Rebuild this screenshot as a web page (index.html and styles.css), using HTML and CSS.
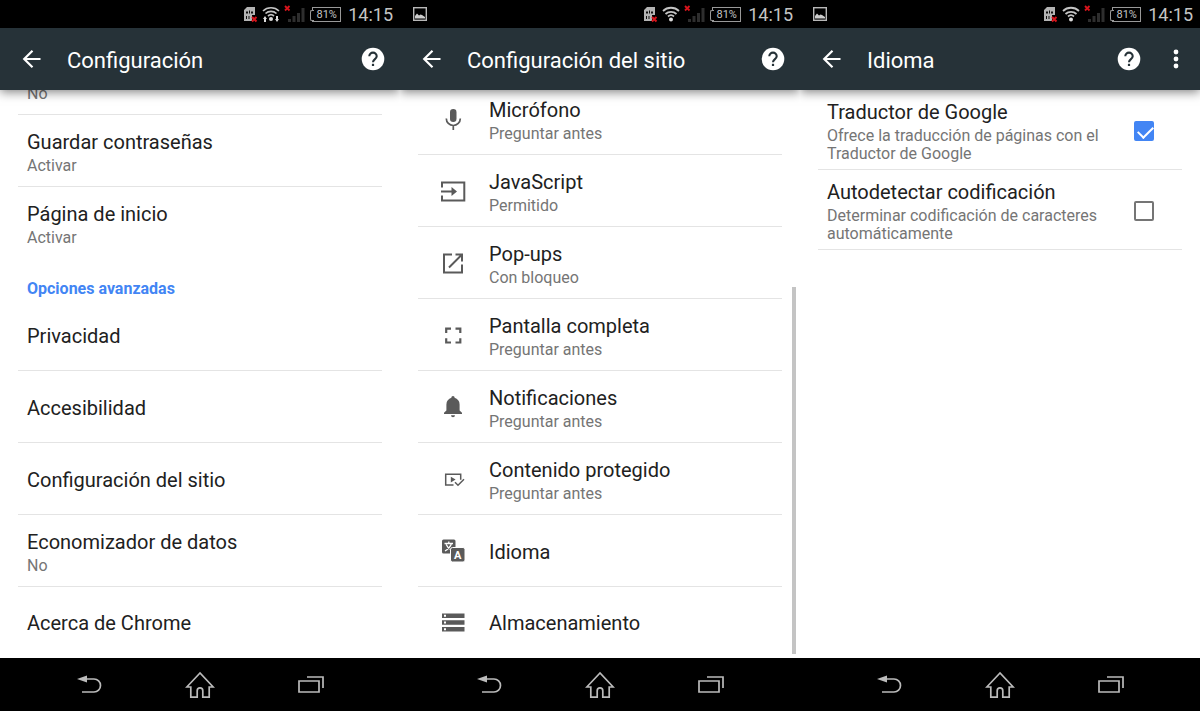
FILE: index.html
```html
<!DOCTYPE html>
<html lang="es">
<head>
    <meta charset="UTF-8">
    <meta name="viewport" content="width=device-width, initial-scale=1.0">
    <title>Configuración</title>
    <link rel="stylesheet" href="styles.css">
</head>
<body>
    <!-- shared icons -->
    <svg class="sprite" aria-hidden="true">
        <symbol id="sim" viewBox="0 0 15 17">
            <path d="M4 1h8v8H9v6H1V4z" fill="#b4b4b4"/>
            <path d="M3 5.500h2v2H3zM6 4.500h1v3H6zM8 5.500h2v2H8zM3 10h1v3H3zM5.500 10h1v3h-1z" fill="#111"/>
            <path d="M9 11l4.500 4.500M13.500 11L9 15.500" stroke="#d8141c" stroke-width="2"/>
        </symbol>
        <symbol id="wifi" viewBox="0 0 18 18">
            <g fill="none" stroke="#c4c4c4" stroke-width="1.800">
                <path d="M1 6a11.500 11.500 0 0 1 16 0"/>
                <path d="M3.500 9a8 8 0 0 1 11 0"/>
                <path d="M6 11.500a4.500 4.500 0 0 1 6 0"/>
            </g>
            <circle cx="9" cy="14.500" r="2" fill="#ddd"/>
        </symbol>
        <symbol id="signal" viewBox="0 0 21 18">
            <path d="M4 14h3v3H4zM8.500 11h3v6h-3zM13 8h3v9h-3zM17.500 3h3v14h-3z" fill="#2e2e2e"/>
            <path d="M1 1l4.500 4.500M5.500 1L1 5.500" stroke="#d8141c" stroke-width="1.800"/>
        </symbol>
        <symbol id="picture" viewBox="0 0 14 14">
            <rect x="0.700" y="0.700" width="12.600" height="12.600" fill="none" stroke="#b8b8b8" stroke-width="1.400"/>
            <path d="M2 11.500V9l2-2.500 2 2 1.500-1L9 8l3 2v1.500z" fill="#ccc"/>
        </symbol>
        <symbol id="back" viewBox="0 0 24 24">
            <path d="M20.500 12H4.500M12.500 3.700L4.200 12l8.300 8.300" fill="none" stroke="#fff" stroke-width="2.200"/>
        </symbol>
        <symbol id="help" viewBox="0 0 24 24">
            <circle cx="12" cy="12" r="11.300" fill="#fff"/>
            <path d="M8.300 9.300a3.700 3.700 0 1 1 7.400 0c0 2.700-3.700 2.900-3.700 5.900" fill="none" stroke="#263238" stroke-width="2.100"/>
            <path d="M10.900 16.800h2.200V19h-2.200z" fill="#263238"/>
        </symbol>
        <symbol id="nav-back" viewBox="0 0 28 20">
            <path d="M10 4h9a6.500 6.500 0 0 1 0 13H7" fill="none" stroke="#bbb" stroke-width="1.700"/>
            <path d="M2 4l10-3.500v7z" fill="#bbb"/>
        </symbol>
        <symbol id="nav-home" viewBox="0 0 30 28">
            <path d="M15 2L1.800 16h4v10.200h6.400v-6.500a2.800 2.800 0 0 1 5.600 0v6.500h6.400V16h4z" fill="none" stroke="#bbb" stroke-width="1.700"/>
        </symbol>
        <symbol id="nav-recent" viewBox="0 0 28 20">
            <path d="M2 6h20v11H2zM10 2h16v11" fill="none" stroke="#bbb" stroke-width="1.700"/>
        </symbol>
    </svg>

    <main class="screens">
        <section class="phone">
            <div class="status-bar">
                <div class="status-icons">
                    <svg class="icon-sim"><use href="#sim"/></svg>
                    <svg class="icon-wifi" viewBox="0 0 18 18">
                        <g fill="none" stroke="#c4c4c4" stroke-width="1.700">
                            <path d="M1 6a11.500 11.500 0 0 1 16 0"/>
                            <path d="M3.500 8.500a8 8 0 0 1 11 0"/>
                            <path d="M6 11a4.500 4.500 0 0 1 6 0"/>
                        </g>
                        <circle cx="9" cy="14" r="2" fill="#ddd"/>
                        <path d="M1 14l2-3 2 3H4v3H2v-3zM13 14h1v-3h2v3h1l-2 3z" fill="#ddd"/>
                    </svg>
                    <svg class="icon-signal"><use href="#signal"/></svg>
                    <span class="battery">81%</span>
                    <time class="clock">14:15</time>
                </div>
            </div>
            <header class="app-bar">
                <button class="icon-btn" aria-label="Atrás"><svg class="icon-back"><use href="#back"/></svg></button>
                <h1 class="app-title">Configuración</h1>
                <button class="icon-btn" aria-label="Ayuda"><svg class="icon-help"><use href="#help"/></svg></button>
            </header>
            <div class="content scrolled">
                <ul class="list">
                    <li><a class="row sub-only" href="#"><span class="row-sub">No</span></a></li>
                    <li><a class="row" href="#"><span class="row-text"><span class="row-title">Guardar contraseñas</span><span class="row-sub">Activar</span></span></a></li>
                    <li><a class="row plain" href="#"><span class="row-text"><span class="row-title">Página de inicio</span><span class="row-sub">Activar</span></span></a></li>
                </ul>
                <h2 class="section-title">Opciones avanzadas</h2>
                <ul class="list">
                    <li><a class="row" href="#"><span class="row-title">Privacidad</span></a></li>
                    <li><a class="row" href="#"><span class="row-title">Accesibilidad</span></a></li>
                    <li><a class="row" href="#"><span class="row-title">Configuración del sitio</span></a></li>
                    <li><a class="row" href="#"><span class="row-text"><span class="row-title">Economizador de datos</span><span class="row-sub">No</span></span></a></li>
                    <li><a class="row plain" href="#"><span class="row-title">Acerca de Chrome</span></a></li>
                </ul>
            </div>
            <nav class="nav-bar">
                <button class="nav-btn" aria-label="Volver"><svg class="nav-side"><use href="#nav-back"/></svg></button>
                <button class="nav-btn" aria-label="Inicio"><svg class="nav-home"><use href="#nav-home"/></svg></button>
                <button class="nav-btn" aria-label="Recientes"><svg class="nav-side"><use href="#nav-recent"/></svg></button>
            </nav>
        </section>

        <section class="phone">
            <div class="status-bar">
                <svg class="icon-picture"><use href="#picture"/></svg>
                <div class="status-icons">
                    <svg class="icon-sim"><use href="#sim"/></svg>
                    <svg class="icon-wifi"><use href="#wifi"/></svg>
                    <svg class="icon-signal"><use href="#signal"/></svg>
                    <span class="battery">81%</span>
                    <time class="clock">14:15</time>
                </div>
            </div>
            <header class="app-bar">
                <button class="icon-btn" aria-label="Atrás"><svg class="icon-back"><use href="#back"/></svg></button>
                <h1 class="app-title">Configuración del sitio</h1>
                <button class="icon-btn" aria-label="Ayuda"><svg class="icon-help"><use href="#help"/></svg></button>
            </header>
            <div class="content scrolled">
                <ul class="list">
                    <li><a class="row with-icon" href="#">
                        <svg class="row-icon" viewBox="0 0 28 28"><rect x="11" y="3" width="6.500" height="13" rx="3.200" fill="#5a5a5a"/><path d="M7.300 12.500a7 7 0 0 0 14 0M14.300 19.500V24" fill="none" stroke="#5a5a5a" stroke-width="1.700"/></svg>
                        <span class="row-text"><span class="row-title">Micrófono</span><span class="row-sub">Preguntar antes</span></span>
                    </a></li>
                    <li><a class="row with-icon" href="#">
                        <svg class="row-icon" viewBox="0 0 28 28"><path d="M3 9.500V4.500h22.300v18H3v-5M2 13.500h13" fill="none" stroke="#5a5a5a" stroke-width="2"/><path d="M12.500 9l5.500 4.500-5.500 4.500z" fill="#5a5a5a"/></svg>
                        <span class="row-text"><span class="row-title">JavaScript</span><span class="row-sub">Permitido</span></span>
                    </a></li>
                    <li><a class="row with-icon" href="#">
                        <svg class="row-icon" viewBox="0 0 28 28"><path d="M13 4.500H5v18h18v-8M16.500 4.500H23v7M23 4.500L10 17.500" fill="none" stroke="#5a5a5a" stroke-width="2"/></svg>
                        <span class="row-text"><span class="row-title">Pop-ups</span><span class="row-sub">Con bloqueo</span></span>
                    </a></li>
                    <li><a class="row with-icon" href="#">
                        <svg class="row-icon" viewBox="0 0 28 28"><path d="M12 6.700H7.200V11M16.500 6.700h4.800V11M12 20.500H7.200v-4.300M16.500 20.500h4.800v-4.300" fill="none" stroke="#5a5a5a" stroke-width="2.200"/></svg>
                        <span class="row-text"><span class="row-title">Pantalla completa</span><span class="row-sub">Preguntar antes</span></span>
                    </a></li>
                    <li><a class="row with-icon" href="#">
                        <svg class="row-icon" viewBox="0 0 28 28"><path d="M14 2c1 0 1.600.800 1.600 1.800 3 .800 5 3.300 5 6.700v6l2.400 2.300V20H5v-1.200l2.400-2.300v-6c0-3.400 2-5.900 5-6.700C12.400 2.800 13 2 14 2zM12 21.300h4a2 2 0 0 1-4 0z" fill="#5a5a5a"/></svg>
                        <span class="row-text"><span class="row-title">Notificaciones</span><span class="row-sub">Preguntar antes</span></span>
                    </a></li>
                    <li><a class="row with-icon" href="#">
                        <svg class="row-icon" viewBox="0 0 28 28"><path d="M14.500 19H6.700V8.200h15v5.500" fill="none" stroke="#5a5a5a" stroke-width="1.500"/><path d="M11.800 10.700l4.800 2.900-4.800 2.900z" fill="#5a5a5a"/><path d="M16 16.300l3 3 6-6" fill="none" stroke="#5a5a5a" stroke-width="1.500"/></svg>
                        <span class="row-text"><span class="row-title">Contenido protegido</span><span class="row-sub">Preguntar antes</span></span>
                    </a></li>
                    <li><a class="row with-icon" href="#">
                        <svg class="row-icon" viewBox="0 0 28 28" aria-hidden="true"><rect x="3" y="1.500" width="13.500" height="14" rx="1.500" fill="#5a5a5a"/><path d="M5.500 5.500h8.500M9.800 3.500v2M12.500 5.500c-1 3-3 5.500-6.500 7.500M7.200 6.500c1 2.500 3 4.500 5 5.500" fill="none" stroke="#fff" stroke-width="1.300"/><rect x="11.500" y="9.500" width="14.500" height="14.500" rx="2" fill="#5a5a5a" stroke="#fff" stroke-width="1"/><text class="glyph" x="18.800" y="21" text-anchor="middle">A</text></svg>
                        <span class="row-title">Idioma</span>
                    </a></li>
                    <li><a class="row with-icon plain" href="#">
                        <svg class="row-icon" viewBox="0 0 28 28"><path d="M3 4.500h22.500V9H3zM3 11.200h22.500v4.500H3zM3 18h22.500v4.500H3z" fill="#5a5a5a"/><path d="M5 5.800h2v2H5zM5 12.500h2v2H5zM5 19.200h2v2H5z" fill="#fff"/></svg>
                        <span class="row-title">Almacenamiento</span>
                    </a></li>
                </ul>
                <div class="scrollbar"></div>
            </div>
            <nav class="nav-bar">
                <button class="nav-btn" aria-label="Volver"><svg class="nav-side"><use href="#nav-back"/></svg></button>
                <button class="nav-btn" aria-label="Inicio"><svg class="nav-home"><use href="#nav-home"/></svg></button>
                <button class="nav-btn" aria-label="Recientes"><svg class="nav-side"><use href="#nav-recent"/></svg></button>
            </nav>
        </section>

        <section class="phone">
            <div class="status-bar">
                <svg class="icon-picture"><use href="#picture"/></svg>
                <div class="status-icons">
                    <svg class="icon-sim"><use href="#sim"/></svg>
                    <svg class="icon-wifi"><use href="#wifi"/></svg>
                    <svg class="icon-signal"><use href="#signal"/></svg>
                    <span class="battery">81%</span>
                    <time class="clock">14:15</time>
                </div>
            </div>
            <header class="app-bar with-menu">
                <button class="icon-btn" aria-label="Atrás"><svg class="icon-back"><use href="#back"/></svg></button>
                <h1 class="app-title">Idioma</h1>
                <button class="icon-btn" aria-label="Ayuda"><svg class="icon-help"><use href="#help"/></svg></button>
                <button class="icon-btn" aria-label="Más opciones"><svg class="icon-more" viewBox="0 0 6 20" fill="#fff"><circle cx="3" cy="3" r="2.400"/><circle cx="3" cy="10" r="2.400"/><circle cx="3" cy="17" r="2.400"/></svg></button>
            </header>
            <div class="content">
                <div class="list">
                    <label class="row option" for="translate">
                        <span class="row-text"><span class="row-title">Traductor de Google</span><span class="row-sub">Ofrece la traducción de páginas con el Traductor de Google</span></span>
                        <input type="checkbox" id="translate" class="check" checked>
                    </label>
                    <label class="row option" for="encoding">
                        <span class="row-text"><span class="row-title">Autodetectar codificación</span><span class="row-sub">Determinar codificación de caracteres automáticamente</span></span>
                        <input type="checkbox" id="encoding" class="check">
                    </label>
                </div>
            </div>
            <nav class="nav-bar">
                <button class="nav-btn" aria-label="Volver"><svg class="nav-side"><use href="#nav-back"/></svg></button>
                <button class="nav-btn" aria-label="Inicio"><svg class="nav-home"><use href="#nav-home"/></svg></button>
                <button class="nav-btn" aria-label="Recientes"><svg class="nav-side"><use href="#nav-recent"/></svg></button>
            </nav>
        </section>
    </main>
</body>
</html>
```
FILE: styles.css
```css
* {
    box-sizing: border-box;
}
body {
    margin: 0;
    font-family: Roboto, "Liberation Sans", sans-serif;
    background-color: #fff;
    color: #212121;
}
button {
    padding: 0;
    border: none;
    background: none;
    cursor: pointer;
}
svg {
    display: block;
    flex: none;
}
.sprite {
    display: none;
}
.screens {
    display: grid;
    grid-template-columns: repeat(3, 1fr);
    height: 100vh;
}
.phone {
    display: flex;
    flex-direction: column;
    min-width: 0;
    min-height: 0;
}

/* status bar */
.status-bar {
    display: flex;
    align-items: center;
    flex: none;
    height: 28px;
    padding: 0 7px 0 13px;
    background-color: #000;
    color: #c4c4c4;
}
.status-icons {
    display: flex;
    align-items: center;
    gap: 4px;
    margin-left: auto;
}
.icon-picture {
    width: 14px;
    height: 14px;
}
.icon-sim {
    width: 15px;
    height: 17px;
}
.icon-wifi {
    width: 18px;
    height: 18px;
}
.icon-signal {
    width: 21px;
    height: 18px;
}
.battery {
    position: relative;
    width: 29px;
    height: 15px;
    margin-left: 3px;
    border: 1px solid #999;
    font-size: 11px;
    line-height: 13px;
    text-align: center;
}
.battery::before {
    content: "";
    position: absolute;
    left: -3px;
    top: 2px;
    width: 3px;
    height: 9px;
    border: 1px solid #999;
    border-right: none;
    border-radius: 2px 0 0 2px;
    background-color: #000;
}
.clock {
    margin-left: 3px;
    font-size: 18px;
    line-height: 26px;
    padding-top: 2px;
}

/* app bar */
.app-bar {
    display: flex;
    align-items: center;
    flex: none;
    position: relative;
    z-index: 1;
    height: 62px;
    padding: 0 4px 0 8px;
    background-color: #263238;
    color: #fff;
    box-shadow: 0 2px 10px rgba(0, 0, 0, 0.5);
    clip-path: inset(0 0 -16px 0);
}
.with-menu {
    padding-right: 1px;
}
.icon-btn {
    display: flex;
    align-items: center;
    justify-content: center;
    width: 47px;
    height: 47px;
}
.icon-back {
    width: 24px;
    height: 24px;
}
.icon-help {
    width: 24px;
    height: 24px;
}
.icon-more {
    width: 6px;
    height: 20px;
}
.app-title {
    flex: 1;
    margin: 0 0 0 12px;
    padding-top: 3px;
    font-size: 22px;
    font-weight: 400;
    line-height: 28px;
    white-space: nowrap;
}

/* content */
.content {
    display: flex;
    flex-direction: column;
    flex: 1;
    position: relative;
    min-height: 0;
    overflow: hidden;
}
.scrolled {
    justify-content: flex-end;
}
.list {
    flex: none;
    margin: 0 18px;
    padding: 0;
    list-style: none;
}
.row {
    display: flex;
    align-items: center;
    height: 72px;
    padding: 2px 9px 0;
    border-bottom: 1px solid #e4e4e4;
    color: inherit;
    text-decoration: none;
}
.plain {
    border-bottom-color: transparent;
}
.sub-only {
    align-items: flex-end;
    padding-bottom: 11px;
}
.list:last-of-type .plain {
    height: 71px;
}
.row-text {
    display: flex;
    flex-direction: column;
    gap: 2px;
}
.row-title {
    font-size: 20px;
    line-height: 26px;
}
.row-sub {
    color: #757575;
    font-size: 16px;
    line-height: 18px;
}
.with-icon {
    gap: 22px;
    padding-left: 21px;
}
.row-icon {
    width: 28px;
    height: 28px;
}
.glyph {
    fill: #fff;
    font-size: 11px;
    font-weight: 700;
}
.section-title {
    flex: none;
    margin: 0 27px;
    color: #4285f4;
    font-size: 16px;
    line-height: 20px;
    padding: 20px 0 0;
}
.option {
    justify-content: space-between;
    height: auto;
    padding: 9px 28px 6px 9px;
}
.option .row-text {
    max-width: 280px;
}
.check {
    flex: none;
    appearance: none;
    position: relative;
    width: 20px;
    height: 20px;
    margin: 0;
    border: 2px solid #757575;
    border-radius: 2px;
}
.check:checked {
    border-color: #4285f4;
    background-color: #4285f4;
}
.check:checked::before {
    content: "";
    position: absolute;
    left: 5px;
    top: 0;
    width: 7px;
    height: 13px;
    border: solid #fff;
    border-width: 0 2px 2px 0;
    transform: rotate(45deg);
}
.scrollbar {
    position: absolute;
    top: 197px;
    right: 4px;
    bottom: 4px;
    width: 4px;
    background-color: #c4c4c4;
}

/* navigation bar */
.nav-bar {
    display: grid;
    grid-template-columns: repeat(3, 1fr);
    flex: none;
    height: 53px;
    padding: 1px 34px 0;
    background-color: #000;
}
.nav-btn {
    display: flex;
    align-items: center;
    justify-content: center;
}
.nav-side {
    width: 28px;
    height: 20px;
}
.nav-home {
    width: 30px;
    height: 28px;
}
```
